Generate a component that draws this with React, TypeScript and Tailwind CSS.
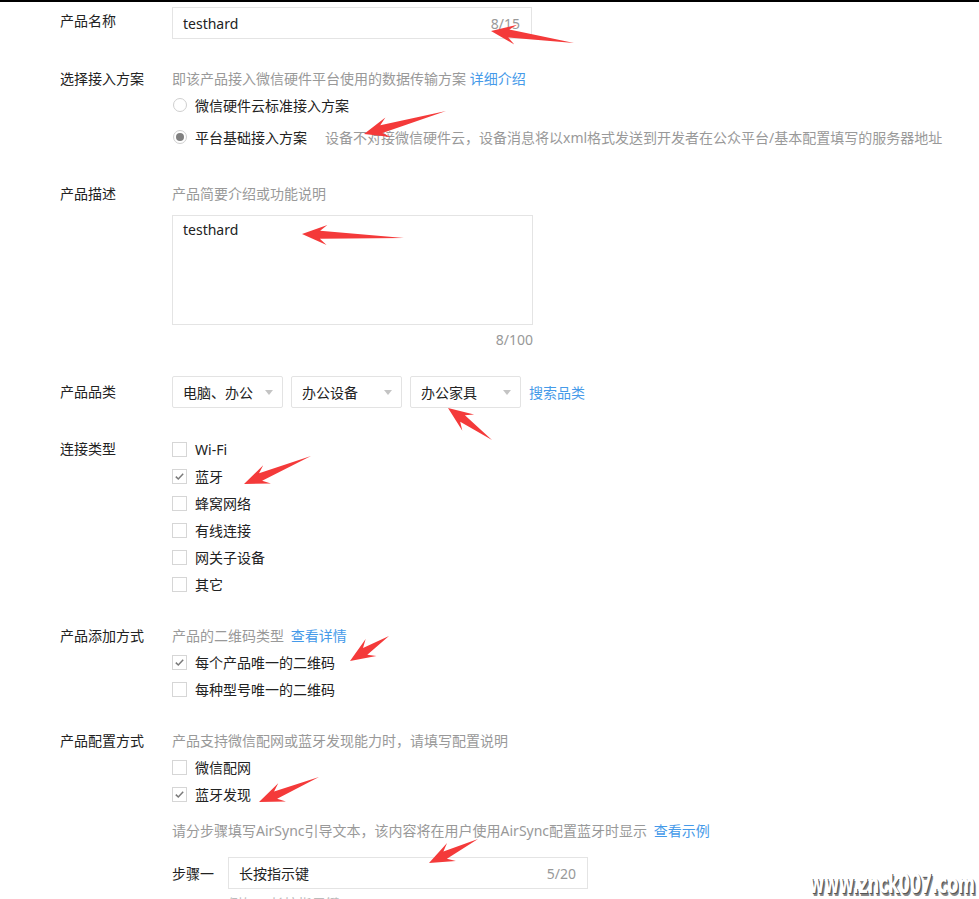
import React from 'react';
import clsx from 'clsx';

type Pt = [number, number];

// tapered annotation arrow: tip T, tail S
const arrowPoints = (tip: Pt, tail: Pt, headLen = 22, headW = 10, shaftW = 4) => {
  const [tx, ty] = tip;
  const [sx, sy] = tail;
  const len = Math.hypot(tx - sx, ty - sy);
  const dx = (tx - sx) / len;
  const dy = (ty - sy) / len;
  const nx = -dy;
  const ny = dx;
  const hx = tx - dx * headLen;
  const hy = ty - dy * headLen;
  const pts: Pt[] = [
    [tx, ty],
    [hx + nx * headW - dx * 3, hy + ny * headW - dy * 3],
    [hx + nx * shaftW + dx * 4, hy + ny * shaftW + dy * 4],
    [sx, sy],
    [hx - nx * shaftW + dx * 4, hy - ny * shaftW + dy * 4],
    [hx - nx * headW - dx * 3, hy - ny * headW - dy * 3],
  ];
  return pts.map((p) => p.join(',')).join(' ');
};

const arrows: { tip: Pt; tail: Pt }[] = [
  { tip: [491, 31], tail: [574, 43] },
  { tip: [364, 134], tail: [446, 111] },
  { tip: [302, 234], tail: [404, 238] },
  { tip: [448, 408], tail: [492, 440] },
  { tip: [244, 484], tail: [311, 456] },
  { tip: [350, 661], tail: [389, 636] },
  { tip: [259, 802], tail: [319, 777] },
  { tip: [429, 863], tail: [478, 839] },
];

const Label: React.FC<{ text: string; className?: string }> = ({ text, className }) => (
  <div className={clsx('w-[112px] shrink-0 leading-[20px] text-[#222]', className)}>{text}</div>
);

const Checkbox: React.FC<{ checked?: boolean; label: string }> = ({ checked, label }) => (
  <div className="flex h-[27px] items-center gap-[8px]">
    <span className="flex h-[15px] w-[15px] items-center justify-center border border-[#d6d6d6] bg-white">
      {checked && (
        <svg width="11" height="11" viewBox="0 0 11 11">
          <polyline points="1.8,5.6 4.3,8 9.2,2.8" fill="none" stroke="#7a7a7a" strokeWidth="1.5" />
        </svg>
      )}
    </span>
    <span className="leading-[20px] text-[#222]">{label}</span>
  </div>
);

const Radio: React.FC<{ checked?: boolean; label: string; children?: React.ReactNode }> = ({
  checked,
  label,
  children,
}) => (
  <div className="flex h-[32px] items-center">
    <span className="ml-[1px] mr-[8px] flex h-[14px] w-[14px] items-center justify-center rounded-full border border-[#cfcfcf] bg-white">
      {checked && <span className="h-[8px] w-[8px] rounded-full bg-[#808080]" />}
    </span>
    <span className="text-[#222]">{label}</span>
    {children}
  </div>
);

const Select: React.FC<{ value: string }> = ({ value }) => (
  <div className="flex h-[32px] w-[111px] items-center justify-between rounded-[2px] border border-[#e3e3e3] pl-[10px] pr-[9px]">
    <span className="text-[#222]">{value}</span>
    <span className="h-0 w-0 border-x-[4px] border-t-[5px] border-x-transparent border-t-[#c4c4c4]" />
  </div>
);

export default function App() {
  return (
    <div className="relative h-[899px] w-full overflow-hidden bg-white font-['Noto_Sans','Noto_Sans_CJK_SC',sans-serif] text-[14px]">
      <div className="h-[2px] bg-black" />

      <div className="pl-[60px]">
        {/* 产品名称 */}
        <div className="mt-[5px] flex">
          <Label text="产品名称" className="pt-[4px]" />
          <div className="flex h-[32px] w-[360px] items-center justify-between border border-[#e4e4e4] pl-[10px] pr-[11px]">
            <span className="text-[#222]">testhard</span>
            <span className="text-[#999]">8/15</span>
          </div>
        </div>

        {/* 选择接入方案 */}
        <div className="mt-[30px] flex">
          <Label text="选择接入方案" />
          <div>
            <div className="leading-[20px] text-[#999]">
              即该产品接入微信硬件平台使用的数据传输方案 <span className="text-[#459ae9]">详细介绍</span>
            </div>
            <Radio label="微信硬件云标准接入方案" />
            <Radio checked label="平台基础接入方案">
              <span className="ml-[18px] whitespace-nowrap text-[#999]">
                设备不对接微信硬件云，设备消息将以xml格式发送到开发者在公众平台/基本配置填写的服务器地址
              </span>
            </Radio>
          </div>
        </div>

        {/* 产品描述 */}
        <div className="mt-[31px] flex">
          <Label text="产品描述" />
          <div className="w-[361px]">
            <div className="leading-[20px] text-[#999]">产品简要介绍或功能说明</div>
            <div className="mt-[11px] h-[110px] border border-[#e4e4e4] px-[10px] pt-[4px] leading-[20px] text-[#222]">
              testhard
            </div>
            <div className="mt-[5px] text-right leading-[20px] text-[#999]">8/100</div>
          </div>
        </div>

        {/* 产品品类 */}
        <div className="mt-[26px] flex">
          <Label text="产品品类" className="pt-[6px]" />
          <div className="flex items-center gap-[8px]">
            <Select value="电脑、办公" />
            <Select value="办公设备" />
            <Select value="办公家具" />
            <span className="text-[#459ae9]">搜索品类</span>
          </div>
        </div>

        {/* 连接类型 */}
        <div className="mt-[28px] flex">
          <Label text="连接类型" className="pt-[3px]" />
          <div>
            <Checkbox label="Wi-Fi" />
            <Checkbox checked label="蓝牙" />
            <Checkbox label="蜂窝网络" />
            <Checkbox label="有线连接" />
            <Checkbox label="网关子设备" />
            <Checkbox label="其它" />
          </div>
        </div>

        {/* 产品添加方式 */}
        <div className="mt-[28px] flex">
          <Label text="产品添加方式" />
          <div>
            <div className="leading-[20px] text-[#999]">
              产品的二维码类型 <span className="ml-[3px] text-[#459ae9]">查看详情</span>
            </div>
            <div className="mt-[3px]">
              <Checkbox checked label="每个产品唯一的二维码" />
              <Checkbox label="每种型号唯一的二维码" />
            </div>
          </div>
        </div>

        {/* 产品配置方式 */}
        <div className="mt-[28px] flex">
          <Label text="产品配置方式" />
          <div>
            <div className="leading-[20px] text-[#999]">产品支持微信配网或蓝牙发现能力时，请填写配置说明</div>
            <div className="mt-[3px]">
              <Checkbox label="微信配网" />
              <Checkbox checked label="蓝牙发现" />
            </div>
            <div className="mt-[13px] leading-[20px] text-[#999]">
              请分步骤填写AirSync引导文本，该内容将在用户使用AirSync配置蓝牙时显示{' '}
              <span className="ml-[3px] text-[#459ae9]">查看示例</span>
            </div>
            <div className="mt-[16px] flex items-center">
              <span className="w-[56px] text-[#222]">步骤一</span>
              <div className="flex h-[32px] w-[360px] items-center justify-between border border-[#e4e4e4] pl-[10px] pr-[11px]">
                <span className="text-[#222]">长按指示键</span>
                <span className="text-[#999]">5/20</span>
              </div>
            </div>
            <div className="ml-[56px] mt-[5px] leading-[20px] text-[#bbb]">例如：长按指示键</div>
          </div>
        </div>
      </div>

      {/* annotation arrows */}
      <svg className="pointer-events-none absolute left-0 top-0" width="979" height="899">
        {arrows.map((a, i) => (
          <polygon key={i} points={arrowPoints(a.tip, a.tail)} fill="#f43a3a" />
        ))}
      </svg>

      {/* watermark */}
      <div className="absolute bottom-[2px] right-[4px] origin-bottom-right scale-x-[0.97] scale-y-[1.4] font-['DejaVu_Sans',sans-serif] text-[19px] font-bold leading-none tracking-[-0.5px] text-white [font-stretch:condensed] [text-shadow:1px_1px_0_#555,2px_2px_0_#888]">
        www.znck007.com
      </div>
    </div>
  );
}
